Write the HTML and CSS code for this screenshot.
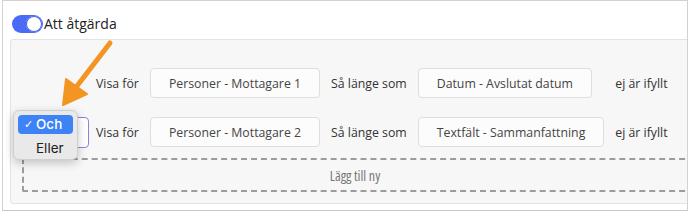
FILE: index.html
```html
<!DOCTYPE html>
<html lang="sv">
<head>
<meta charset="utf-8">
<link rel="stylesheet" href="styles.css">
</head>
<body>
<div class="frame">
  <div class="header">
    <span class="toggle"><span class="knob"></span></span>
    <span class="title">Att åtgärda</span>
  </div>
  <div class="panel">
    <div class="rows">
      <div class="cell"></div>
      <span class="label">Visa för</span>
      <span class="box">Personer - Mottagare 1</span>
      <span class="label">Så länge som</span>
      <span class="box">Datum - Avslutat datum</span>
      <span class="label">ej är ifyllt</span>

      <div class="cell">
        <div class="select"><span class="chev">⌄</span></div>
        <div class="menu">
          <div class="item active"><span class="check">✓</span>Och</div>
          <div class="item">Eller</div>
        </div>
      </div>
      <span class="label">Visa för</span>
      <span class="box">Personer - Mottagare 2</span>
      <span class="label">Så länge som</span>
      <span class="box">Textfält - Sammanfattning</span>
      <span class="label">ej är ifyllt</span>
    </div>
    <div class="add"><span class="add-text">Lägg till ny</span></div>
  </div>
  <svg class="arrow" width="688" height="211" viewBox="0 0 688 211">
    <line x1="110" y1="43" x2="77" y2="86" stroke="#f29522" stroke-width="5" stroke-linecap="round"/>
    <polygon points="63,105 66,79 87,94" fill="#f29522" stroke="#f29522" stroke-width="2" stroke-linejoin="round"/>
  </svg>
</div>
</body>
</html>
```

FILE: styles.css
```css
html, body {
  margin: 0;
  padding: 0;
  background: #fff;
  overflow: hidden;
}
body {
  font-family: "Open Sans", "Noto Sans", sans-serif;
  color: #333;
}
.frame {
  position: relative;
  margin-left: 2px;
  width: 686px;
  height: 211px;
  box-sizing: border-box;
  border: 1px solid #d2d2d2;
  border-bottom-color: #c8c8c8;
  overflow: hidden;
  background: #fff;
}
.header {
  display: flex;
  align-items: center;
  gap: 1px;
  padding: 13px 0 0 9px;
  height: 19px;
}
.toggle {
  display: flex;
  align-items: center;
  justify-content: flex-end;
  width: 31px;
  height: 18px;
  border-radius: 9px;
  background: #4a6cf4;
  box-sizing: border-box;
  padding-right: 1px;
}
.knob {
  width: 16px;
  height: 16px;
  border-radius: 50%;
  background: #fff;
  box-shadow: 0 0 0 1px #3e5fe6 inset;
}
.title {
  font-size: 14px;
  color: #222;
  line-height: 19px;
}
.panel {
  margin: 6px -30px 0 7px;
  height: 165px;
  box-sizing: border-box;
  border: 1px solid #e3e3e3;
  border-radius: 3px;
  background: #f7f7f7;
  padding: 28px 11px 0 11px;
}
.rows {
  display: grid;
  grid-template-columns: 63px auto auto auto auto 1fr;
  column-gap: 11px;
  row-gap: 19px;
  align-items: center;
  justify-items: start;
}
.cell {
  position: relative;
  height: 30px;
  width: 63px;
}
.label {
  font-size: 12.3px;
  color: #333;
  white-space: nowrap;
}
.box {
  height: 30px;
  box-sizing: border-box;
  padding: 0 18px;
  display: flex;
  align-items: center;
  background: #fcfcfc;
  border: 1px solid #dedede;
  border-radius: 4px;
  font-size: 12.3px;
  color: #444;
  white-space: nowrap;
}
.select {
  position: absolute;
  left: -4px;
  top: 0;
  width: 71px;
  height: 31px;
  box-sizing: border-box;
  border: 1px solid #8b83dc;
  border-radius: 4px;
  background: #fff;
}
.chev {
  position: absolute;
  right: 8px;
  top: 6px;
  font-size: 10px;
  color: #777;
}
.menu {
  position: absolute;
  left: -9px;
  top: -7px;
  width: 65px;
  height: 50px;
  box-sizing: border-box;
  padding: 4px 4px;
  background: #e9e9e9;
  border: 1px solid #cfcfcf;
  border-radius: 6px;
  box-shadow: 0 3px 10px rgba(0,0,0,0.22);
  font-family: "Inter", "Liberation Sans", Arial, sans-serif;
  font-size: 13.5px;
  z-index: 2;
}
.item {
  height: 19px;
  line-height: 19px;
  padding-left: 18px;
  border-radius: 4px;
  color: #222;
  position: relative;
  margin-bottom: 5px;
}
.item.active {
  background: #3d83f5;
  color: #fff;
  font-weight: 500;
}
.check {
  position: absolute;
  left: 6px;
  top: 0;
  font-weight: normal;
  font-family: "DejaVu Sans", sans-serif;
  font-size: 11px;
}
.add {
  margin-top: 11px;
  height: 34px;
  box-sizing: border-box;
  border: 2px dashed #9c9c9c;
  border-radius: 2px;
  display: flex;
  align-items: center;
  justify-content: center;
  padding-right: 17px;
  color: #777;
}
.add-text {
  font-family: "Open Sans", sans-serif;
  font-stretch: 80%;
  font-size: 14px;
}
.arrow {
  position: absolute;
  left: -3px;
  top: -1px;
  z-index: 3;
  pointer-events: none;
}
```
